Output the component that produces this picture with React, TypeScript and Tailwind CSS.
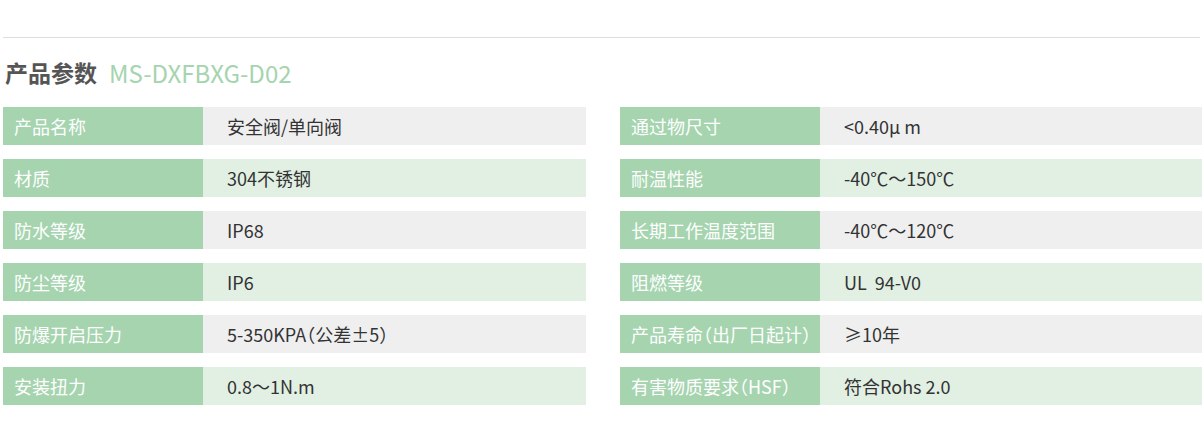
import React from 'react';

type Spec = { label: string; value: string };

const leftSpecs: Spec[] = [
    { label: '产品名称', value: '安全阀/单向阀' },
    { label: '材质', value: '304不锈钢' },
    { label: '防水等级', value: 'IP68' },
    { label: '防尘等级', value: 'IP6' },
    { label: '防爆开启压力', value: '5-350KPA（公差±5）' },
    { label: '安装扭力', value: '0.8～1N.m' },
];

const rightSpecs: Spec[] = [
    { label: '通过物尺寸', value: '<0.40μ m' },
    { label: '耐温性能', value: '-40℃～150℃' },
    { label: '长期工作温度范围', value: '-40℃～120℃' },
    { label: '阻燃等级', value: 'UL  94-V0' },
    { label: '产品寿命（出厂日起计）', value: '≥10年' },
    { label: '有害物质要求（HSF）', value: '符合Rohs 2.0' },
];

const SpecRow: React.FC<Spec & { index: number }> = ({ label, value, index }) => {
    // gray rows alternate with light green rows
    const valueBg = index % 2 === 0 ? 'bg-[#efeff0]' : 'bg-[#e1f0e3]';
    return (
        <div className="flex h-[38px]">
            <div className="flex w-[200px] shrink-0 items-center whitespace-nowrap bg-[#a5d4af] pl-[11px] text-white">
                {label}
            </div>
            <div className={`flex flex-1 items-center whitespace-pre pl-[24px] text-[#333333] ${valueBg}`}>
                {value}
            </div>
        </div>
    );
};

const App: React.FC = () => {
    return (
        <div
            className="h-[424px] w-[1202px] bg-white pt-[37px] pl-[3px] [font-feature-settings:'halt']"
            style={{ fontFamily: '"Noto Sans CJK SC", "Noto Sans", sans-serif' }}
        >
            <div className="mr-[2px] border-t border-[#dddddd]" />
            <div className="flex h-[69px] items-center gap-[12px] leading-none">
                <span className="pl-[2px] text-[23px] font-bold text-[#555555]">产品参数</span>
                <span className="text-[24px] text-[#a5d4af]">MS-DXFBXG-D02</span>
            </div>
            <div className="grid grid-cols-[583px_582px] gap-x-[34px] gap-y-[14px] text-[18px]">
                {leftSpecs.map((spec, i) => (
                    <React.Fragment key={spec.label}>
                        <SpecRow {...spec} index={i} />
                        <SpecRow {...rightSpecs[i]} index={i} />
                    </React.Fragment>
                ))}
            </div>
        </div>
    );
};

export default App;
